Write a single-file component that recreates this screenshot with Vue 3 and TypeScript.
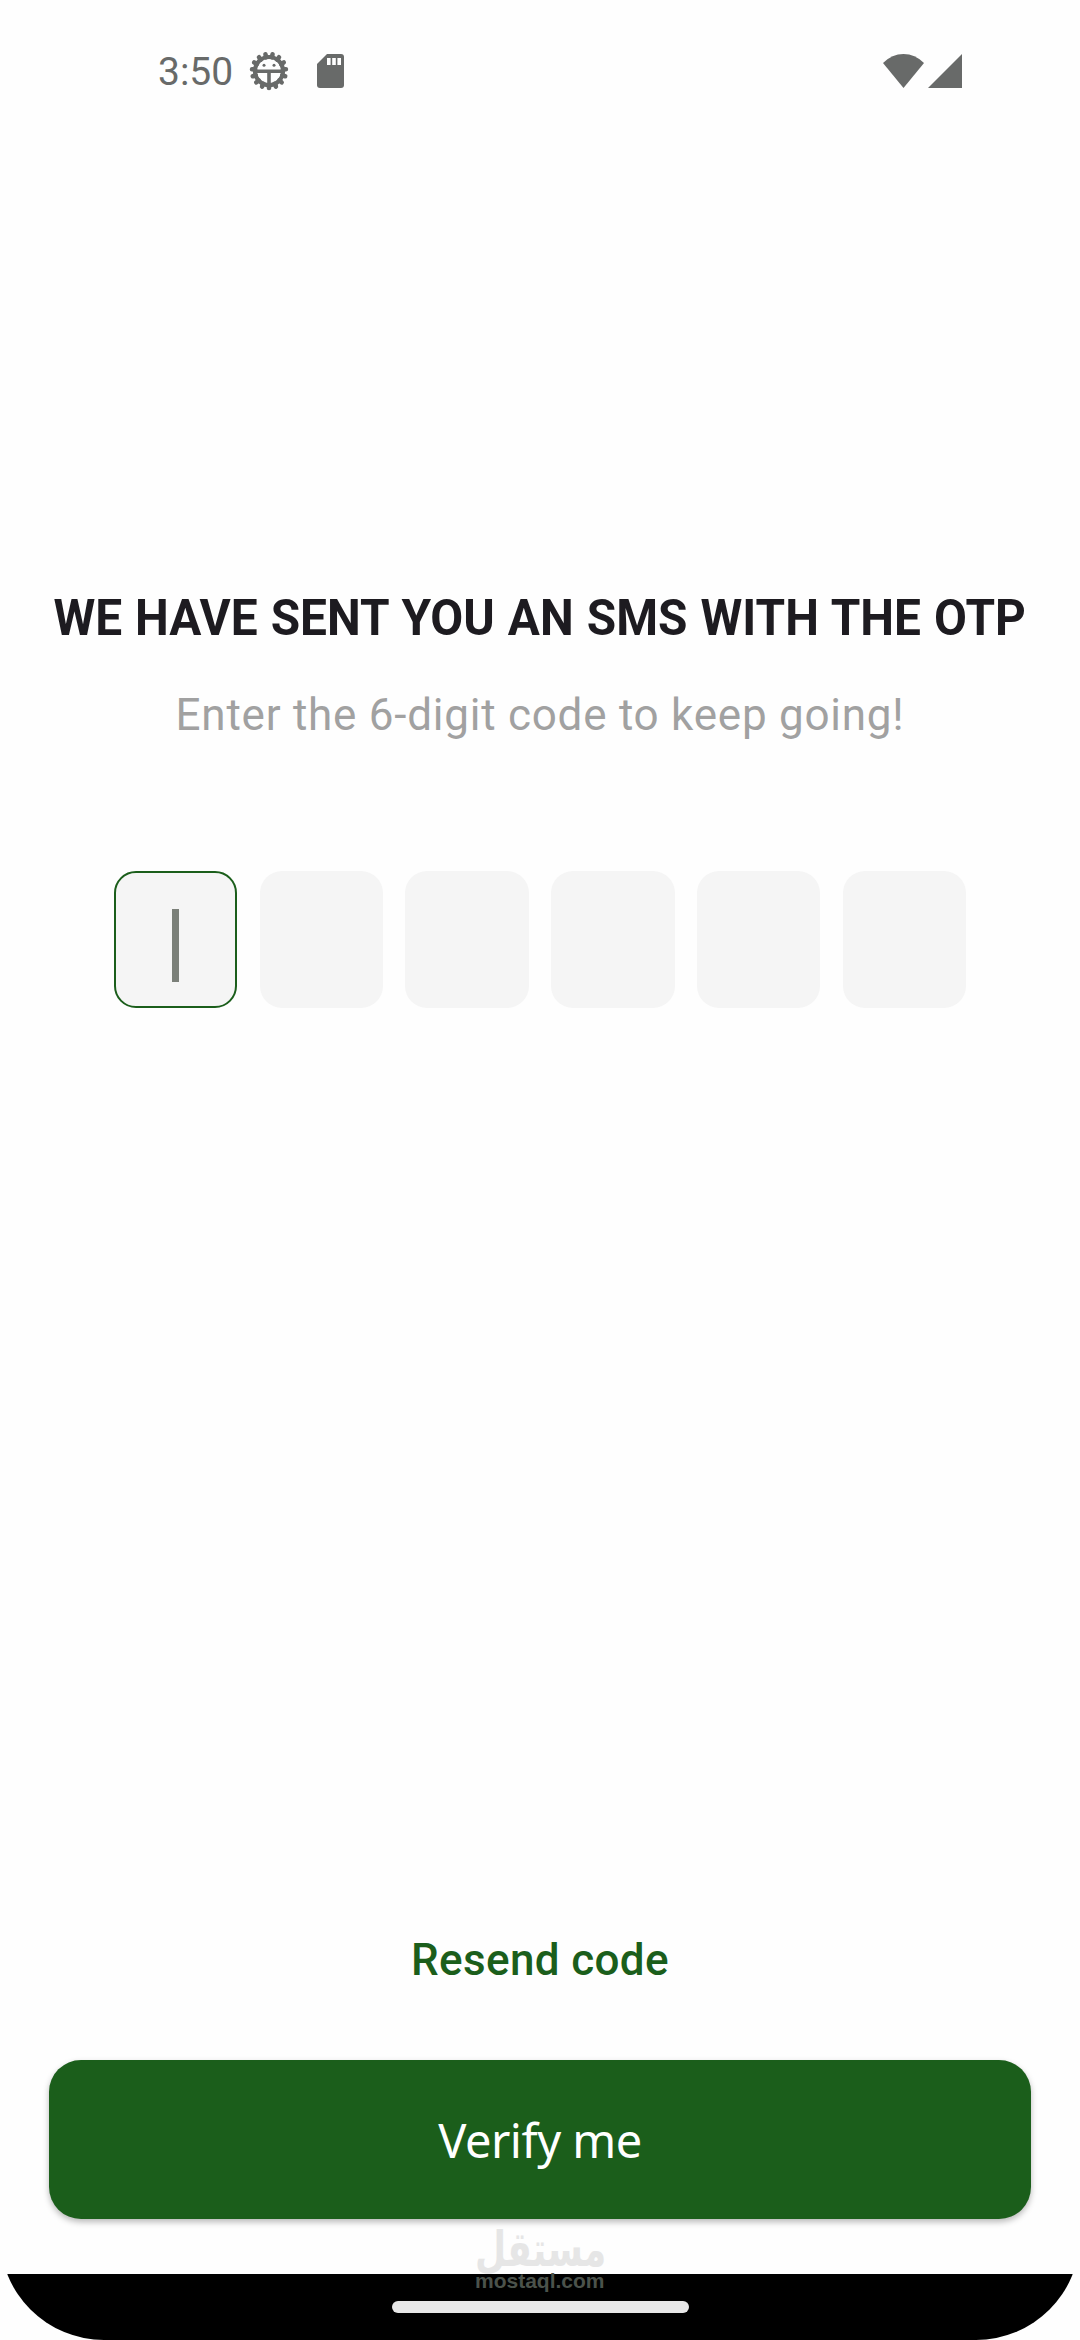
<script setup lang="ts">
import { ref } from 'vue'

const digits = ref<string[]>(['', '', '', '', '', ''])
const active = ref<number>(0)
const teeth: number[] = Array.from({ length: 15 }, (_, i) => i * 24)
</script>

<template>
  <main class="screen">
    <header class="status">
      <div class="status-left">
        <span class="time">3:50</span>
        <svg class="gear" width="40" height="40" viewBox="-20 -20 40 40">
          <g stroke="#686a69" stroke-width="4.6" stroke-linecap="round">
            <line v-for="a in teeth" :key="a" x1="0" y1="14" x2="0" y2="17" :transform="`rotate(${a})`" />
          </g>
          <circle r="14" fill="none" stroke="#686a69" stroke-width="4.2" />
          <path d="M-12 .2H12M0 0V13" stroke="#686a69" stroke-width="3.6" />
          <circle cx="-5" cy="-5.7" r="1.5" fill="#686a69" />
          <circle cx="5" cy="-5.7" r="1.5" fill="#686a69" />
        </svg>
        <svg class="sd" width="27" height="34" viewBox="0 0 27 34">
          <path d="M10 0H24Q27 0 27 3V31Q27 34 24 34H3Q0 34 0 31V10Z" fill="#686a69" />
          <path d="M10 4h3.6v7H10zM15.2 4h3.6v7h-3.6zM20.4 4H24v7h-3.6z" fill="#fff" />
        </svg>
      </div>
      <div class="status-right">
        <svg width="41" height="34" viewBox="0 0 41 34">
          <path d="M0 9Q9 0 20.5 0T41 9L20.5 34Z" fill="#686a69" />
        </svg>
        <svg width="34" height="34" viewBox="0 0 34 34">
          <path d="M34 0V34H0Z" fill="#686a69" />
        </svg>
      </div>
    </header>

    <section class="content">
      <h1>WE HAVE SENT YOU AN SMS WITH THE OTP</h1>
      <p>Enter the 6-digit code to keep going!</p>
      <div class="otp">
        <div v-for="(d, i) in digits" :key="i" class="cell" :class="{ active: i === active }">
          <i v-if="i === active" class="caret"></i>{{ d }}
        </div>
      </div>
    </section>

    <section class="actions">
      <button class="resend">Resend code</button>
      <button class="verify">Verify me</button>
    </section>

    <footer class="nav"><div class="pill"></div></footer>

    <div class="watermark">
      <span class="brand" lang="ar" dir="rtl">مستقل</span>
      <span class="domain">mostaql.com</span>
    </div>
  </main>
</template>

<style>
body {
  background: #fefefe;
}
</style>

<style scoped>
.screen {
  position: relative;
  box-sizing: border-box;
  width: 1080px;
  height: 2340px;
  display: flex;
  flex-direction: column;
  overflow: hidden;
  background: #fefefe;
  border-radius: 0 0 104px 104px;
  font-family: Roboto, sans-serif;
}
.status {
  flex: none;
  height: 142px;
  box-sizing: border-box;
  padding: 0 118px 0 158px;
  display: flex;
  align-items: center;
  justify-content: space-between;
  color: #686a69;
}
.status-left,
.status-right {
  display: flex;
  align-items: center;
}
.status-right {
  gap: 4px;
}
.time {
  width: 91px;
  padding-top: 2px;
  font-size: 39px;
  line-height: 46px;
  white-space: nowrap;
}
.sd {
  margin-left: 28px;
}
.content {
  display: flex;
  flex-direction: column;
  align-items: center;
}
h1 {
  margin: 441px 0 0;
  font-family: Roboto, sans-serif;
  font-size: 50px;
  font-weight: 700;
  line-height: 70px;
  word-spacing: 1.2px;
  color: #1d1b20;
  white-space: nowrap;
  transform: scaleX(0.956);
}
p {
  margin: 32px 0 0;
  font-size: 44px;
  line-height: 60px;
  letter-spacing: 0.75px;
  color: #a1a1a1;
  white-space: nowrap;
}
.otp {
  margin-top: 126px;
  display: flex;
  gap: 22.3px;
}
.cell {
  box-sizing: border-box;
  width: 123.4px;
  height: 137px;
  border-radius: 22px;
  background: #f5f5f5;
  display: flex;
  align-items: center;
  justify-content: center;
}
.cell.active {
  border: 2px solid #1b5e1b;
}
.caret {
  width: 7px;
  height: 73px;
  margin-top: 12px;
  background: #7b8079;
}
.actions {
  margin-top: auto;
  padding: 0 49px 55px;
  display: flex;
  flex-direction: column;
  align-items: center;
}
button {
  border: 0;
  padding: 0;
  background: none;
  white-space: nowrap;
}
.resend {
  margin-bottom: 70px;
  font: 500 44px/60px Roboto, sans-serif;
  letter-spacing: 0.35px;
  color: #1b5e1b;
}
.verify {
  align-self: stretch;
  height: 159px;
  border-radius: 32px;
  background: #1b5e1b;
  color: #fff;
  font: 400 47px/60px 'Noto Sans', sans-serif;
  letter-spacing: -0.5px;
  box-shadow: 0 3px 6px rgba(0, 0, 0, 0.28);
}
.nav {
  flex: none;
  height: 66px;
  display: flex;
  align-items: center;
  justify-content: center;
  background: #000;
}
.pill {
  width: 297px;
  height: 12px;
  border-radius: 6px;
  background: #e8e8e8;
}
.watermark {
  position: absolute;
  left: 475px;
  top: 2222px;
  width: 130px;
  height: 70px;
}
.brand,
.domain {
  position: absolute;
  left: 0;
  white-space: nowrap;
}
.brand {
  display: block;
  top: 8px;
  font: 700 44px/36px 'DejaVu Sans', sans-serif;
  color: #e6e6e6;
  transform: scale(0.815, 1.1);
  transform-origin: 0 0;
}
.domain {
  display: block;
  top: 48px;
  font: 700 21px/22px 'Liberation Sans', sans-serif;
  color: #4b524b;
}
</style>
